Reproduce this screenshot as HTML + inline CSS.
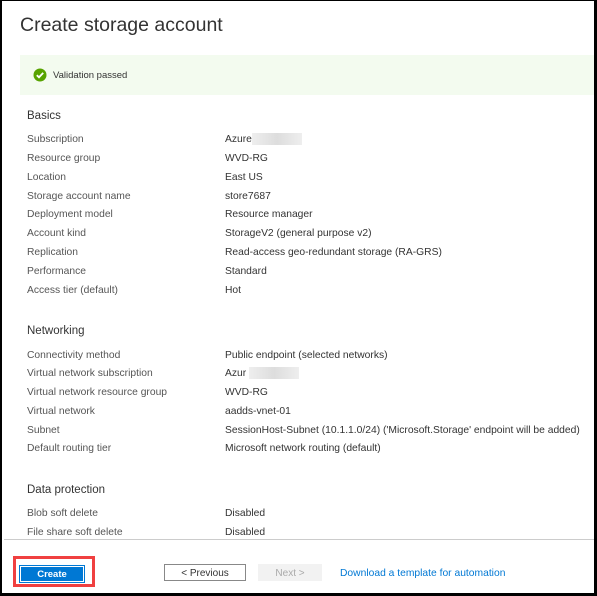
<!DOCTYPE html><html><head><style>
body{margin:0;width:597px;height:596px;overflow:hidden;background:#fff;font-family:"Liberation Sans",sans-serif;position:relative}
.frame{position:absolute;left:0;top:0;width:597px;height:596px;box-sizing:border-box;border-style:solid;border-color:#000;border-width:1px 3px 3px 2px}
.t{position:absolute;white-space:nowrap;font-size:10.3px;line-height:12px;margin-top:2px}
.l{left:27px;color:#555}.v{left:225px;color:#333}
.h{position:absolute;left:27px;font-size:11.5px;color:#333;margin-top:2px}
.blur{position:absolute;width:50px;height:12px;background:linear-gradient(90deg,#eee,#ddd,#eee);margin-top:2px}
</style></head><body>
<div class="t" style="left:20px;top:11px;font-size:19.5px;line-height:24px;color:#333">Create storage account</div>
<div style="position:absolute;left:20px;top:55px;width:577px;height:40px;background:#f3fbef"></div>
<svg style="position:absolute;left:33px;top:68px" width="14" height="14"><circle cx="7" cy="7" r="6.5" fill="#57a300"/><path d="M3.8 7.2l2.2 2.1 4.2-4.4" stroke="#fff" stroke-width="1.8" fill="none"/></svg>
<div class="t" style="left:53px;top:68px;font-size:9.5px;color:#333">Validation passed</div>
<div class="h" style="top:108px">Basics</div>
<div class="t l" style="top:132px">Subscription</div><div class="t v" style="top:132px">Azure</div><div class="blur" style="left:252px;top:131px"></div>
<div class="t l" style="top:151px">Resource group</div><div class="t v" style="top:151px">WVD-RG</div>
<div class="t l" style="top:170px">Location</div><div class="t v" style="top:170px">East US</div>
<div class="t l" style="top:189px">Storage account name</div><div class="t v" style="top:189px">store7687</div>
<div class="t l" style="top:207px">Deployment model</div><div class="t v" style="top:207px">Resource manager</div>
<div class="t l" style="top:226px">Account kind</div><div class="t v" style="top:226px">StorageV2 (general purpose v2)</div>
<div class="t l" style="top:245px">Replication</div><div class="t v" style="top:245px">Read-access geo-redundant storage (RA-GRS)</div>
<div class="t l" style="top:264px">Performance</div><div class="t v" style="top:264px">Standard</div>
<div class="t l" style="top:283px">Access tier (default)</div><div class="t v" style="top:283px">Hot</div>
<div class="h" style="top:323px">Networking</div>
<div class="t l" style="top:348px">Connectivity method</div><div class="t v" style="top:348px">Public endpoint (selected networks)</div>
<div class="t l" style="top:366px">Virtual network subscription</div><div class="t v" style="top:366px">Azur</div><div class="blur" style="left:249px;top:365px"></div>
<div class="t l" style="top:385px">Virtual network resource group</div><div class="t v" style="top:385px">WVD-RG</div>
<div class="t l" style="top:404px">Virtual network</div><div class="t v" style="top:404px">aadds-vnet-01</div>
<div class="t l" style="top:423px">Subnet</div><div class="t v" style="top:423px">SessionHost-Subnet (10.1.1.0/24) ('Microsoft.Storage' endpoint will be added)</div>
<div class="t l" style="top:441px">Default routing tier</div><div class="t v" style="top:441px">Microsoft network routing (default)</div>
<div class="h" style="top:482px">Data protection</div>
<div class="t l" style="top:506px">Blob soft delete</div><div class="t v" style="top:506px">Disabled</div>
<div class="t l" style="top:525px">File share soft delete</div><div class="t v" style="top:525px">Disabled</div>
<div style="position:absolute;left:4px;top:539px;width:590px;height:1px;background:#ccc"></div>
<div style="position:absolute;left:13px;top:556px;width:76px;height:25px;border:3px solid #f04040;background:#fff"></div>
<div style="position:absolute;left:20px;top:566px;width:62px;height:14px;background:#0078d4;border:1px solid #fff;outline:1px solid #0078d4;color:#fff;font-size:9.5px;font-weight:bold;text-align:center;line-height:16px">Create</div>
<div style="position:absolute;left:164px;top:564px;width:82px;height:17px;border:1px solid #888;box-sizing:border-box;font-size:10px;color:#333;text-align:center;line-height:18px">&lt; Previous</div>
<div style="position:absolute;left:258px;top:564px;width:64px;height:17px;background:#f2f2f2;font-size:10px;color:#aaa;text-align:center;line-height:19px">Next &gt;</div>
<div class="t" style="left:340px;top:566px;color:#0078d4">Download a template for automation</div>
<div class="frame"></div>
</body></html>
